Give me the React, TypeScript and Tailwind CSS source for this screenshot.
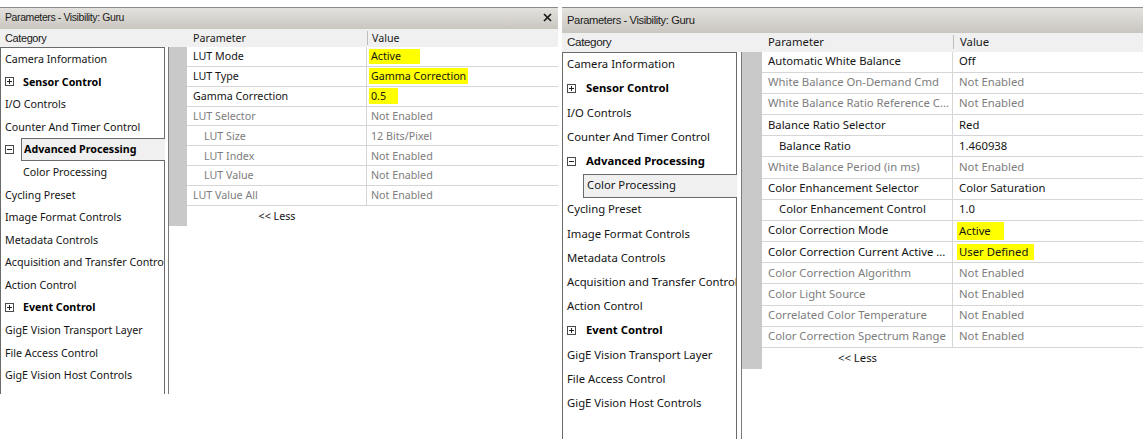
import React from "react";

type Cfg = {
  win: string;
  title: string;
  titleText: string;
  header: string;
  headCat: string;
  pcol: string;
  font: string;
  pane: string;
  catRow: string;
  selPl: string;
  gap: string;
  gray: string;
  prow: string;
  valPl: string;
  iconSize: number;
};

const leftCfg: Cfg = {
  win: "w-[558px] h-[387px]",
  title: "h-[21.6px] pl-[5px] pr-[6px]",
  titleText: "text-[10.5px] tracking-[-0.4px]",
  header: "h-[18.4px]",
  headCat: "w-[187px] pl-[5px] text-[11px] tracking-[-0.4px] font-['Liberation_Sans',Arial,sans-serif]",
  pcol: "w-[180px]",
  font: "text-[10.7px]",
  pane: "w-[165px]",
  catRow: "h-[22.57px]",
  selPl: "pl-[2px]",
  gap: "w-[3px]",
  gray: "w-[18px]",
  prow: "h-[19.85px]",
  valPl: "pl-[4px]",
  iconSize: 9,
};

const rightCfg: Cfg = {
  win: "flex-1 self-stretch",
  title: "h-[26px] pl-[5px] pr-[6px]",
  titleText: "text-[11.2px] tracking-[-0.4px]",
  header: "h-[18.5px]",
  headCat: "w-[200px] pl-[5px] text-[11.7px] tracking-[-0.4px] font-['Liberation_Sans',Arial,sans-serif]",
  pcol: "w-[191px]",
  font: "text-[11.3px]",
  pane: "w-[175px]",
  catRow: "h-[24.21px]",
  selPl: "pl-[3px]",
  gap: "w-[4px]",
  gray: "w-[20px]",
  prow: "h-[21.18px]",
  valPl: "pl-[6px]",
  iconSize: 9,
};

type Cat = { t: string; bold?: boolean; icon?: "plus" | "minus"; indent?: boolean };

const cats: Cat[] = [
  { t: "Camera Information" },
  { t: "Sensor Control", bold: true, icon: "plus" },
  { t: "I/O Controls" },
  { t: "Counter And Timer Control" },
  { t: "Advanced Processing", bold: true, icon: "minus" },
  { t: "Color Processing", indent: true },
  { t: "Cycling Preset" },
  { t: "Image Format Controls" },
  { t: "Metadata Controls" },
  { t: "Acquisition and Transfer Control" },
  { t: "Action Control" },
  { t: "Event Control", bold: true, icon: "plus" },
  { t: "GigE Vision Transport Layer" },
  { t: "File Access Control" },
  { t: "GigE Vision Host Controls" },
];

type Param = { p: string; v: string; dis?: boolean; indent?: boolean; hl?: string };

const leftParams: Param[] = [
  { p: "LUT Mode", v: "Active", hl: "w-[51px] h-[15px] leading-[15px]" },
  { p: "LUT Type", v: "Gamma Correction", hl: "w-[99px] h-[16px] leading-[16px]" },
  { p: "Gamma Correction", v: "0.5", hl: "w-[29px] h-[16px] leading-[16px]" },
  { p: "LUT Selector", v: "Not Enabled", dis: true },
  { p: "LUT Size", v: "12 Bits/Pixel", dis: true, indent: true },
  { p: "LUT Index", v: "Not Enabled", dis: true, indent: true },
  { p: "LUT Value", v: "Not Enabled", dis: true, indent: true },
  { p: "LUT Value All", v: "Not Enabled", dis: true },
];

const rightParams: Param[] = [
  { p: "Automatic White Balance", v: "Off" },
  { p: "White Balance On-Demand Cmd", v: "Not Enabled", dis: true },
  { p: "White Balance Ratio Reference C...", v: "Not Enabled", dis: true },
  { p: "Balance Ratio Selector", v: "Red" },
  { p: "Balance Ratio", v: "1.460938", indent: true },
  { p: "White Balance Period (in ms)", v: "Not Enabled", dis: true },
  { p: "Color Enhancement Selector", v: "Color Saturation" },
  { p: "Color Enhancement Control", v: "1.0", indent: true },
  { p: "Color Correction Mode", v: "Active", hl: "w-[47px] h-[18px] leading-[18px]" },
  { p: "Color Correction Current Active ...", v: "User Defined", hl: "w-[77px] h-[16px] leading-[16px]" },
  { p: "Color Correction Algorithm", v: "Not Enabled", dis: true },
  { p: "Color Light Source", v: "Not Enabled", dis: true },
  { p: "Correlated Color Temperature", v: "Not Enabled", dis: true },
  { p: "Color Correction Spectrum Range", v: "Not Enabled", dis: true },
];

function BoxIcon({ minus, size }: { minus?: boolean; size: number }) {
  const m = size / 2;
  return (
    <svg width={size} height={size} viewBox={`0 0 ${size} ${size}`} className="shrink-0">
      <rect x={0.5} y={0.5} width={size - 1} height={size - 1} fill="white" stroke="#4a4a4a" strokeWidth={1} />
      <line x1={2} y1={m} x2={size - 2} y2={m} stroke="#222" strokeWidth={1} />
      {!minus && <line x1={m} y1={2} x2={m} y2={size - 2} stroke="#222" strokeWidth={1} />}
    </svg>
  );
}

function Window({
  cfg,
  selected,
  params,
  closable,
}: {
  cfg: Cfg;
  selected: number;
  params: Param[];
  closable?: boolean;
}) {
  const body = "font-['Noto_Sans',sans-serif]";
  return (
    <div className={`flex flex-col ${cfg.win}`}>
      <div
        className={`flex items-center justify-between border-t border-[#8c8c8c] bg-linear-to-b from-[#e4e2de] to-[#c9c6c0] ${cfg.title}`}
      >
        <span className={`font-['Liberation_Sans',Arial,sans-serif] text-[#1c1c1c] ${cfg.titleText}`}>
          Parameters - Visibility: Guru
        </span>
        {closable && (
          <svg width="9" height="9" viewBox="0 0 9 9" className="mb-[1px]">
            <line x1="1" y1="1" x2="8" y2="8" stroke="#1a1a1a" strokeWidth="1.7" />
            <line x1="8" y1="1" x2="1" y2="8" stroke="#1a1a1a" strokeWidth="1.7" />
          </svg>
        )}
      </div>
      <div className={`flex items-center bg-[#f0f0f0] text-[#1a1a1a] ${cfg.header}`}>
        <div className={cfg.headCat}>Category</div>
        <div className={`${cfg.pcol} ${body} ${cfg.font} pl-[6px]`}>Parameter</div>
        <div className={`flex flex-1 items-center ${body} ${cfg.font}`}>
          <span className="h-[14px] w-px bg-[#bdbdbd]" />
          <span className={cfg.valPl}>Value</span>
        </div>
      </div>
      <div className={`flex min-h-0 flex-1 ${body} ${cfg.font}`}>
        <div className={`flex flex-col border-l border-t border-[#6a6a6a] ${cfg.pane}`}>
          {cats.map((c, i) => {
            const sel = i === selected;
            const needSpacer = c.icon || c.indent;
            return (
              <div
                key={c.t}
                className={`flex shrink-0 items-stretch ${cfg.catRow} ${sel ? "" : "border-r border-[#6a6a6a]"}`}
              >
                {needSpacer ? (
                  <>
                    <div className="flex w-[20px] shrink-0 items-center pl-[4px]">
                      {c.icon && <BoxIcon minus={c.icon === "minus"} size={cfg.iconSize} />}
                    </div>
                    <div
                      className={`flex min-w-0 flex-1 items-center whitespace-nowrap overflow-hidden ${cfg.selPl} ${
                        sel ? "border-l border-t border-b border-[#6a6a6a] bg-[#f0f0f0]" : ""
                      } ${c.bold ? "font-bold text-black" : "text-[#141414]"}`}
                    >
                      {c.t}
                    </div>
                  </>
                ) : (
                  <div className="flex min-w-0 flex-1 items-center overflow-hidden whitespace-nowrap pl-[4px] text-[#141414]">
                    {c.t}
                  </div>
                )}
              </div>
            );
          })}
          <div className="flex-1 border-r border-[#6a6a6a]" />
        </div>
        <div className={`${cfg.gap} shrink-0`} />
        <div className="flex min-w-0 flex-1 flex-col border-l border-[#7a7a7a]">
          {params.map((r) => (
            <div key={r.p} className={`flex shrink-0 ${cfg.prow}`}>
              <div className={`${cfg.gray} shrink-0 bg-[#c9c9c9]`} />
              <div
                className={`${cfg.pcol} flex shrink-0 items-center overflow-hidden whitespace-nowrap border-b border-r border-[#d6d6d6] ${
                  r.indent ? "pl-[17px]" : "pl-[6px]"
                } ${r.dis ? "text-[#7d7d7d]" : "text-[#141414]"}`}
              >
                {r.p}
              </div>
              <div
                className={`flex min-w-0 flex-1 items-center whitespace-nowrap border-b border-[#d6d6d6] ${cfg.valPl} ${
                  r.dis ? "text-[#7d7d7d]" : "text-[#141414]"
                }`}
              >
                {r.hl ? (
                  <span className={`-ml-[2px] inline-block rounded-[1px] bg-[#ffff00] pl-[2px] ${r.hl}`}>{r.v}</span>
                ) : (
                  r.v
                )}
              </div>
            </div>
          ))}
          <div className={`flex shrink-0 ${cfg.prow}`}>
            <div className={`${cfg.gray} shrink-0 bg-[#c9c9c9]`} />
            <div className={`${cfg.pcol} flex shrink-0 items-center justify-center text-[#141414]`}>
              {"<< Less"}
            </div>
          </div>
        </div>
      </div>
    </div>
  );
}

export default function App() {
  return (
    <div className="flex h-[439px] w-[1143px] items-start overflow-hidden bg-white pt-[7px]">
      <Window cfg={leftCfg} selected={4} params={leftParams} closable />
      <div className="w-[4px] shrink-0" />
      <Window cfg={rightCfg} selected={5} params={rightParams} />
    </div>
  );
}
